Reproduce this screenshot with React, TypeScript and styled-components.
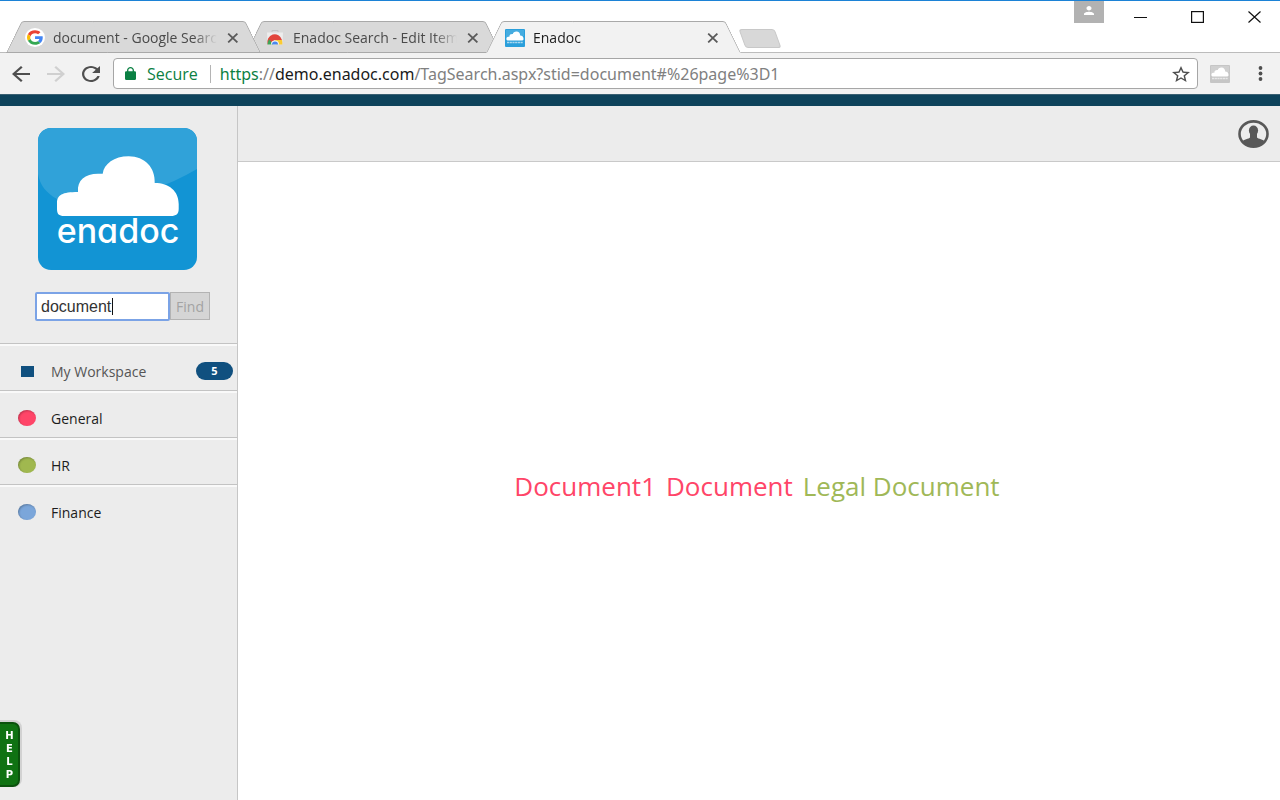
import React from "react";
import styled, { createGlobalStyle } from "styled-components";

const uiFont = `"Open Sans", "Noto Sans", sans-serif`;

const GlobalStyle = createGlobalStyle`
  *, *::before, *::after { box-sizing: border-box; }
  body {
    margin: 0;
    background: #fff;
    font-family: ${uiFont};
    font-size: 14px;
    color: #222;
  }
  button, input { font: inherit; margin: 0; }
  button { border: 0; padding: 0; background: none; cursor: pointer; }
  ul { list-style: none; margin: 0; padding: 0; }
  svg { display: block; flex: none; }
`;

const Window = styled.div`
  display: flex;
  flex-direction: column;
  min-height: 100vh;
  border-top: 1px solid #1c82d6;
`;

/* Title bar and tabs */

const TitleBar = styled.header`
  display: flex;
  justify-content: space-between;
  height: 52px;
  border-bottom: 1px solid #bcbcbc;
`;

const TabStrip = styled.div`
  display: flex;
  align-items: flex-end;
  padding-left: 6px;
  margin-bottom: -1px;
`;

const Tab = styled.div<{ $active?: boolean; $level: number }>`
  position: relative;
  z-index: ${(p) => p.$level};
  display: flex;
  align-items: center;
  width: 255px;
  height: 32px;
  padding: 1px 22px 0 19px;
  margin-right: -15px;
  color: ${(p) => (p.$active ? "#1c1c1c" : "#4a4a4a")};

  &::before,
  &::after {
    content: "";
    position: absolute;
    z-index: -1;
    top: 0;
    bottom: 0;
    background: ${(p) => (p.$active ? "#f2f2f2" : "#d9d9d9")};
    border: 1px solid #a9a9a9;
    border-bottom-color: ${(p) => (p.$active ? "#f2f2f2" : "#a9a9a9")};
  }
  &::before {
    left: 0;
    right: 50%;
    border-right: 0;
    border-top-left-radius: 3px;
    transform: skewX(-26deg);
    transform-origin: 0 100%;
  }
  &::after {
    left: 40%;
    right: 0;
    border-left: 0;
    border-top-right-radius: 3px;
    transform: skewX(26deg);
    transform-origin: 100% 100%;
  }
`;

const TabTitle = styled.span`
  flex: 1;
  min-width: 0;
  margin: 0 10px 0 8px;
  line-height: 20px;
  white-space: nowrap;
  overflow: hidden;
  mask-image: linear-gradient(to right, #000 86%, transparent 100%);
`;

const TabClose = styled.button`
  display: flex;
  color: #5a5a5a;
`;

const NewTab = styled.button`
  width: 36px;
  height: 19px;
  margin: 0 0 5px 16px;
  background: #d8d8d8;
  border: 1px solid #c8c8c8;
  border-radius: 3px;
  transform: skewX(20deg);
`;

const WindowControls = styled.div`
  display: flex;
  align-items: flex-start;
  gap: 5px;
`;

const ProfileButton = styled.button`
  display: flex;
  justify-content: center;
  width: 30px;
  height: 22px;
  padding-top: 5px;
  margin-right: 5px;
  background: #b2b2b2;
`;

const ControlButton = styled.button`
  display: flex;
  align-items: center;
  justify-content: center;
  width: 52px;
  height: 31px;
`;

/* Navigation toolbar */

const Toolbar = styled.nav`
  display: flex;
  align-items: center;
  height: 41px;
  padding: 0 14px 0 12px;
  background: #f2f2f2;
`;

const ToolButton = styled.button<{ $gap: number }>`
  display: flex;
  margin-right: ${(p) => p.$gap}px;
`;

const AddressBar = styled.div`
  flex: 1;
  min-width: 0;
  display: flex;
  align-items: center;
  height: 31px;
  padding: 0 7px 0 11px;
  margin-right: 12px;
  background: #fff;
  border: 1px solid #a6a6a6;
  border-radius: 4px;
  font-size: 16px;
`;

const Secure = styled.span`
  padding: 0 12px 0 11px;
  margin-right: 9px;
  line-height: 18px;
  border-right: 1px solid #b4b4b4;
  color: #0b8043;
`;

const Url = styled.span`
  flex: 1;
  min-width: 0;
  overflow: hidden;
  white-space: nowrap;
  font-family: "Noto Sans", "Open Sans", sans-serif;
  line-height: 22px;
  color: #808080;
`;

const Scheme = styled.span`
  color: #0b8043;
`;

const Host = styled.span`
  color: #1a1a1a;
`;

/* Page */

const Stripe = styled.div`
  height: 12px;
  background: #0e435b;
  border-top: 1px solid #3a6072;
`;

const Page = styled.div`
  flex: 1;
  display: flex;
`;

const Sidebar = styled.aside`
  flex: none;
  width: 238px;
  background: #ececec;
  border-right: 1px solid #c6c6c6;
`;

const LogoLink = styled.a`
  display: block;
  padding: 22px 0 22px 38px;
`;

const SearchForm = styled.form`
  display: flex;
  padding: 0 27px 22px 35px;
`;

const SearchBox = styled.label`
  position: relative;
  flex: 1;
  min-width: 0;
`;

const SearchInput = styled.input`
  display: block;
  width: 100%;
  height: 29px;
  padding: 0 4px;
  background: #fff;
  border: 2px solid #7ba3e6;
  border-radius: 2px;
  outline: 0;
  font-family: "Liberation Sans", Arial, sans-serif;
  font-size: 16px;
  color: #333;
  caret-color: transparent;
`;

const Caret = styled.span`
  position: absolute;
  top: 6px;
  left: 77px;
  width: 1px;
  height: 17px;
  background: #111;
`;

const FindButton = styled.button`
  width: 40px;
  height: 28px;
  background: #d5d5d5;
  border: 1px solid #b3b3b3;
  color: #a3a3a3;
`;

const MenuItem = styled.li`
  border-top: 1px solid #c3c3c3;
`;

const MenuLink = styled.a<{ $muted?: boolean }>`
  display: flex;
  align-items: center;
  height: 46px;
  padding: 6px 4px 0 18px;
  border-top: 2px solid #f9f9f9;
  color: ${(p) => (p.$muted ? "#555" : "#1c1c1c")};
  text-decoration: none;
`;

const Square = styled.span`
  width: 13px;
  height: 11px;
  margin: 0 17px 0 3px;
  background: #10507f;
`;

const Dot = styled.span<{ $color: string }>`
  width: 18px;
  height: 16px;
  margin-right: 15px;
  border-radius: 50%;
  background: ${(p) => p.$color};
  box-shadow: inset 1px 1px 2px rgba(0, 0, 0, 0.25);
`;

const Count = styled.span`
  width: 37px;
  margin-left: auto;
  border-radius: 9px;
  background: #10507f;
  color: #fff;
  font-size: 11px;
  font-weight: 700;
  line-height: 18px;
  text-align: center;
`;

const Content = styled.div`
  flex: 1;
  min-width: 0;
  display: flex;
  flex-direction: column;
`;

const TopBar = styled.div`
  display: flex;
  align-items: center;
  justify-content: flex-end;
  height: 56px;
  padding-right: 11px;
  background: #ececec;
  border-bottom: 1px solid #c9c9c9;
`;

const Results = styled.main`
  flex: 1;
  display: flex;
  align-items: center;
  justify-content: center;
  gap: 10px;
  padding: 10px 4px 0 0;
`;

const ResultLink = styled.a<{ $color: string }>`
  font-size: 26px;
  line-height: 36px;
  text-decoration: none;
  color: ${(p) => p.$color};
`;

const HelpButton = styled.button`
  position: fixed;
  left: 0;
  bottom: 13px;
  display: flex;
  flex-direction: column;
  align-items: center;
  width: 20px;
  height: 65px;
  padding: 5px 0 0 1px;
  background: #0f7212;
  border: 2px solid #0b520d;
  border-left: 0;
  border-radius: 0 7px 7px 0;
  box-shadow: 1px -1px 0 1px #d2d2d2;
  color: #fff;
  font-family: "DejaVu Sans", sans-serif;
  font-size: 10px;
  font-weight: 700;
  line-height: 13px;
`;

type IconProps = { d: string; w: number; h: number; box: string; color: string };

const Icon = ({ d, w, h, box, color }: IconProps) => (
  <svg width={w} height={h} viewBox={box} preserveAspectRatio="none" fill={color} aria-hidden="true">
    <path d={d} />
  </svg>
);

const paths = {
  back: "M20 11H7.83l5.59-5.59L12 4l-8 8 8 8 1.41-1.41L7.83 13H20v-2z",
  forward: "M12 4l-1.41 1.41L16.17 11H4v2h12.17l-5.58 5.59L12 20l8-8z",
  reload:
    "M17.65 6.35C16.2 4.9 14.21 4 12 4c-4.42 0-7.99 3.58-7.99 8s3.57 8 7.99 8c3.73 0 6.84-2.55 7.73-6h-2.08c-.82 2.33-3.04 4-5.65 4-3.31 0-6-2.69-6-6s2.69-6 6-6c1.66 0 3.14.69 4.22 1.78L13 11h7V4l-2.35 2.35z",
  lock: "M18 8h-1V6c0-2.76-2.24-5-5-5S7 3.24 7 6v2H6c-1.1 0-2 .9-2 2v10c0 1.1.9 2 2 2h12c1.1 0 2-.9 2-2V10c0-1.1-.9-2-2-2zm-2.9 0H8.9V6c0-1.71 1.39-3.1 3.1-3.1s3.1 1.39 3.1 3.1v2z",
  star: "M22 9.24l-7.19-.62L12 2 9.19 8.63 2 9.24l5.46 4.73L5.82 21 12 17.27 18.18 21l-1.63-7.03L22 9.24zM12 15.4l-3.76 2.27 1-4.28-3.32-2.88 4.38-.38L12 6.1l1.71 4.04 4.38.38-3.32 2.88 1 4.28L12 15.4z",
  person:
    "M12 12c2.21 0 4-1.79 4-4s-1.79-4-4-4-4 1.79-4 4 1.79 4 4 4zm0 2c-2.67 0-8 1.34-8 4v2h16v-2c0-2.66-5.33-4-8-4z",
};

const cloud =
  "M26 88C21 88 19 86 19 81V75C19 67 24 64 40 64C39 52 47 45.7 60 45.7H64.7C66 36 76 28.3 90.7 28.3C107 28.3 117.5 40 116.7 55C131 55 140.7 63 140.7 76V81C140.7 86 138 88 133 88Z";

const GoogleIcon = () => (
  <svg width="20" height="19" viewBox="0 0 20 19" aria-hidden="true">
    <ellipse cx="10" cy="9.5" rx="10" ry="9.5" fill="#fff" />
    <g transform="translate(2 2.3) scale(.335 .302)">
      <path fill="#EA4335" d="M24 9.5c3.54 0 6.71 1.22 9.21 3.6l6.85-6.85C35.9 2.38 30.47 0 24 0 14.62 0 6.51 5.38 2.56 13.22l7.98 6.19C12.43 13.72 17.74 9.5 24 9.5z" />
      <path fill="#4285F4" d="M46.98 24.55c0-1.57-.15-3.09-.38-4.55H24v9.02h12.94c-.58 2.96-2.26 5.48-4.78 7.18l7.73 6c4.51-4.18 7.09-10.36 7.09-17.65z" />
      <path fill="#FBBC05" d="M10.53 28.59c-.48-1.45-.76-2.99-.76-4.59s.27-3.14.76-4.59l-7.98-6.19C.92 16.46 0 20.12 0 24c0 3.88.92 7.54 2.56 10.78l7.97-6.19z" />
      <path fill="#34A853" d="M24 48c6.48 0 11.93-2.13 15.89-5.81l-7.73-6c-2.15 1.45-4.92 2.3-8.16 2.3-6.26 0-11.57-4.22-13.47-9.91l-7.98 6.19C6.51 42.62 14.62 48 24 48z" />
    </g>
  </svg>
);

const StoreIcon = () => (
  <svg width="20" height="19" viewBox="0 0 20 19" aria-hidden="true">
    <path d="M7 4V2.5h6V4" fill="none" stroke="#c4c4c4" strokeWidth="1" />
    <path d="M2 4.5h16l-.6 12H2.6Z" fill="#ededed" />
    <path d="M2.600 16.500A7.400 8 0 0 1 17 12H10Z" fill="#e2453c" />
    <path d="M2.600 16.500C2.600 14 3.400 12.300 4.400 11.200L8 16.500Z" fill="#3da557" />
    <path d="M10 12H17C17.400 13.400 17.500 15 17.400 16.500H11Z" fill="#fbcb32" />
    <path d="M6 16.500a4 4 0 0 1 8 0Z" fill="#f4f4f4" />
    <path d="M7 16.500a3 3 0 0 1 6 0Z" fill="#4a87ee" />
  </svg>
);

const CloudIcon = ({ tint, gloss }: { tint: string; gloss: string }) => (
  <svg width="20" height="18" viewBox="0 0 20 18" aria-hidden="true">
    <rect width="20" height="18" rx="1" fill={tint} />
    <path d="M1 1h18v6L1 10Z" fill={gloss} />
    <g transform="translate(-1.2 -1.8) scale(.14 .15)">
      <path d={cloud} fill="#fff" />
    </g>
    <path d="M2 13.500h16" stroke="#fff" strokeOpacity=".6" strokeWidth="1.600" strokeDasharray="2.200 .500" />
  </svg>
);

const CloseIcon = () => (
  <svg width="12" height="10" viewBox="0 0 12 10" aria-hidden="true">
    <path d="M1.2 .6l9.2 8.8M10.4 .6l-9.2 8.8" stroke="currentColor" strokeWidth="1.8" />
  </svg>
);

const Logo = () => (
  <svg width="159" height="142" viewBox="0 0 159 142" role="img" aria-label="enadoc">
    <defs>
      <clipPath id="logo-shape">
        <rect width="159" height="142" rx="13" />
      </clipPath>
    </defs>
    <g clipPath="url(#logo-shape)">
      <rect width="159" height="142" fill="#1294d4" />
      <path d="M0 0H159V41Q135 55 117 60C90 78 50 86 19 71C8 65 2 57 0 46Z" fill="#30a2d9" />
    </g>
    <path d={cloud} fill="#fff" />
    <text
      x="80"
      y="115"
      textAnchor="middle"
      fill="#fff"
      fontFamily="Inter, sans-serif"
      fontSize="34"
      fontWeight="500"
      style={{ fontFeatureSettings: '"cv11"' }}
    >
      enadoc
    </text>
  </svg>
);

const AccountIcon = () => (
  <svg width="31" height="28" viewBox="0 0 31 28" aria-hidden="true">
    <defs>
      <clipPath id="account-shape">
        <ellipse cx="15.5" cy="14" rx="14" ry="12.6" />
      </clipPath>
    </defs>
    <g clipPath="url(#account-shape)" fill="#585858">
      <ellipse cx="15.5" cy="10.6" rx="4.6" ry="5" />
      <path d="M12 13h7v4.500C20 19 25.500 19 27 22V28H4V22C5.500 19 11 19 12 17.500Z" />
    </g>
    <ellipse cx="15.5" cy="14" rx="14" ry="12.6" fill="none" stroke="#585858" strokeWidth="2.6" />
  </svg>
);

const tabs = [
  { title: "document - Google Search", icon: <GoogleIcon />, level: 2 },
  { title: "Enadoc Search - Edit Items", icon: <StoreIcon />, level: 1 },
  { title: "Enadoc", icon: <CloudIcon tint="#2a9fdb" gloss="#45ace0" />, level: 3, active: true },
];

const folders = [
  { name: "General", color: "#ff4568" },
  { name: "HR", color: "#a0b84f" },
  { name: "Finance", color: "#7ba6da" },
];

const results = [
  { name: "Document1", color: "#ff4568" },
  { name: "Document", color: "#ff4568" },
  { name: "Legal Document", color: "#a0b857" },
];

export default function App() {
  return (
    <>
      <GlobalStyle />
      <Window>
        <TitleBar>
          <TabStrip>
            {tabs.map((t) => (
              <Tab key={t.title} $active={t.active} $level={t.level}>
                {t.icon}
                <TabTitle>{t.title}</TabTitle>
                <TabClose aria-label={`Close ${t.title}`}>
                  <CloseIcon />
                </TabClose>
              </Tab>
            ))}
            <NewTab aria-label="New tab" />
          </TabStrip>
          <WindowControls>
            <ProfileButton aria-label="Profile">
              <Icon d={paths.person} w={10} h={9} box="4 4 16 16" color="#fff" />
            </ProfileButton>
            <ControlButton aria-label="Minimize">
              <svg width="13" height="12" viewBox="0 0 13 12">
                <path d="M0 6.5h13" stroke="#111" />
              </svg>
            </ControlButton>
            <ControlButton aria-label="Maximize">
              <svg width="13" height="12" viewBox="0 0 13 12">
                <rect x=".6" y=".6" width="11.8" height="10.8" fill="none" stroke="#111" strokeWidth="1.2" />
              </svg>
            </ControlButton>
            <ControlButton aria-label="Close window">
              <svg width="13" height="12" viewBox="0 0 13 12">
                <path d="M.5 .5l12 11M12.5 .5l-12 11" stroke="#111" strokeWidth="1.2" />
              </svg>
            </ControlButton>
          </WindowControls>
        </TitleBar>

        <Toolbar>
          <ToolButton aria-label="Back" $gap={17}>
            <Icon d={paths.back} w={18} h={16} box="4 4 16 16" color="#4f4f4f" />
          </ToolButton>
          <ToolButton aria-label="Forward" $gap={17}>
            <Icon d={paths.forward} w={18} h={16} box="4 4 16 16" color="#d0d0d0" />
          </ToolButton>
          <ToolButton aria-label="Reload" $gap={13}>
            <Icon d={paths.reload} w={18} h={16} box="4 4 16 16" color="#4f4f4f" />
          </ToolButton>
          <AddressBar>
            <Icon d={paths.lock} w={11} h={13} box="4 1 16 21" color="#0b8043" />
            <Secure>Secure</Secure>
            <Url>
              <Scheme>https</Scheme>://<Host>demo.enadoc.com</Host>
              /TagSearch.aspx?stid=document#%26page%3D1
            </Url>
            <Icon d={paths.star} w={18} h={16} box="2 2 20 19" color="#4f4f4f" />
          </AddressBar>
          <ToolButton aria-label="Enadoc extension" $gap={28}>
            <CloudIcon tint="#c6c6c6" gloss="#d0d0d0" />
          </ToolButton>
          <ToolButton aria-label="Menu" $gap={3}>
            <svg width="5" height="15" viewBox="0 0 5 15" fill="#4f4f4f">
              <circle cx="2.5" cy="2" r="1.9" />
              <circle cx="2.5" cy="7.5" r="1.9" />
              <circle cx="2.5" cy="13" r="1.9" />
            </svg>
          </ToolButton>
        </Toolbar>

        <Stripe />

        <Page>
          <Sidebar>
            <LogoLink href="#home">
              <Logo />
            </LogoLink>
            <SearchForm onSubmit={(e) => e.preventDefault()}>
              <SearchBox>
                <SearchInput aria-label="Search documents" defaultValue="document" />
                <Caret />
              </SearchBox>
              <FindButton type="submit">Find</FindButton>
            </SearchForm>
            <ul>
              <MenuItem>
                <MenuLink href="#workspace" $muted>
                  <Square />
                  My Workspace
                  <Count>5</Count>
                </MenuLink>
              </MenuItem>
              {folders.map((f) => (
                <MenuItem key={f.name}>
                  <MenuLink href={`#${f.name}`}>
                    <Dot $color={f.color} />
                    {f.name}
                  </MenuLink>
                </MenuItem>
              ))}
            </ul>
          </Sidebar>
          <Content>
            <TopBar>
              <button aria-label="Account">
                <AccountIcon />
              </button>
            </TopBar>
            <Results>
              {results.map((r) => (
                <ResultLink key={r.name} href={`#${r.name}`} $color={r.color}>
                  {r.name}
                </ResultLink>
              ))}
            </Results>
          </Content>
        </Page>
      </Window>
      <HelpButton aria-label="Help">
        <span>H</span>
        <span>E</span>
        <span>L</span>
        <span>P</span>
      </HelpButton>
    </>
  );
}
